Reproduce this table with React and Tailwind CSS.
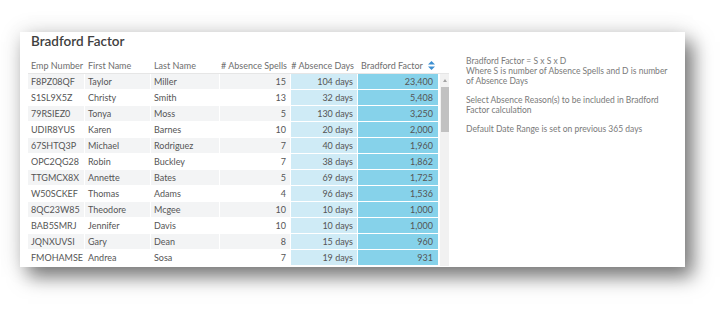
const rows = [
  ['F8PZ08QF', 'Taylor', 'Miller', 15, '104 days', '23,400'],
  ['S1SL9X5Z', 'Christy', 'Smith', 13, '32 days', '5,408'],
  ['79RSIEZ0', 'Tonya', 'Moss', 5, '130 days', '3,250'],
  ['UDIR8YUS', 'Karen', 'Barnes', 10, '20 days', '2,000'],
  ['67SHTQ3P', 'Michael', 'Rodriguez', 7, '40 days', '1,960'],
  ['OPC2QG28', 'Robin', 'Buckley', 7, '38 days', '1,862'],
  ['TTGMCX8X', 'Annette', 'Bates', 5, '69 days', '1,725'],
  ['W50SCKEF', 'Thomas', 'Adams', 4, '96 days', '1,536'],
  ['8QC23W85', 'Theodore', 'Mcgee', 10, '10 days', '1,000'],
  ['BAB5SMRJ', 'Jennifer', 'Davis', 10, '10 days', '1,000'],
  ['JQNXUVSI', 'Gary', 'Dean', 8, '15 days', '960'],
  ['FMOHAMSE', 'Andrea', 'Sosa', 7, '19 days', '931'],
]

function SortIcon() {
  return (
    <svg width="7" height="9" viewBox="0 0 7 9" className="shrink-0">
      <path d="M3.5 0 L7 3.6 L0 3.6 Z" fill="#3d8fd1" />
      <path d="M3.5 9 L7 5.4 L0 5.4 Z" fill="#3d8fd1" />
    </svg>
  )
}

export default function App() {
  return (
    <div
      className="w-[727px] h-[309px] bg-white overflow-hidden pl-[20px] pt-[32px]"
      style={{ fontFamily: 'Lato, "Open Sans", sans-serif' }}
    >
      <div className="w-[665px] h-[235px] bg-white flex flex-col shadow-[0_0_22px_rgba(0,0,0,0.12),8px_10px_18px_rgba(0,0,0,0.5)]">
        <div className="h-[26px] pl-[11px] text-[13.5px] font-semibold text-[#404040] leading-[19px]">
          Bradford Factor
        </div>
        <div className="flex flex-1 min-h-0">
          {/* table */}
          <div className="ml-[8px] flex flex-col text-[9px]">
            <div className="flex h-[16px] items-center text-[#6e6e6e] border-b border-[#e6e6e6]">
              <div className="w-[57px] pl-[3px]">Emp Number</div>
              <div className="w-[66px] pl-[3px]">First Name</div>
              <div className="w-[69px] pl-[3px]">Last Name</div>
              <div className="w-[71px] pr-[4px] text-right whitespace-nowrap"># Absence Spells</div>
              <div className="w-[67px] pr-[4px] text-right whitespace-nowrap"># Absence Days</div>
              <div className="w-[80px] pl-[3px] pr-[3px] flex items-center justify-between">
                <span>Bradford Factor</span>
                <SortIcon />
              </div>
            </div>
            <div className="flex">
              <div className="flex flex-col text-[#555]">
                {rows.map((r, i) => {
                  const stripe = i % 2 === 0 ? 'bg-[#f3f4f5]' : 'bg-white'
                  return (
                    <div key={r[0]} className="flex h-[16px]">
                      <div className={`w-[57px] pl-[3px] leading-[15px] border-b border-r border-white ${stripe}`}>{r[0]}</div>
                      <div className={`w-[66px] pl-[3px] leading-[15px] border-b border-r border-white ${stripe}`}>{r[1]}</div>
                      <div className={`w-[69px] pl-[3px] leading-[15px] border-b border-r border-white ${stripe}`}>{r[2]}</div>
                      <div className={`w-[71px] pr-[4px] text-right leading-[15px] border-b border-r border-white ${stripe}`}>{r[3]}</div>
                      <div className="w-[67px] pr-[4px] text-right leading-[15px] border-b border-r border-white bg-[#cfebf6]">{r[4]}</div>
                      <div className="w-[80px] pr-[5px] text-right leading-[15px] border-b border-white bg-[#86d2ea]">{r[5]}</div>
                    </div>
                  )
                })}
              </div>
              <div className="ml-[2px] w-[9px] bg-[#f1f1f1] flex flex-col items-center">
                <div className="h-[13px] flex items-center justify-center">
                  <div className="w-0 h-0 border-l-[2.5px] border-r-[2.5px] border-b-[3px] border-l-transparent border-r-transparent border-b-[#a3a3a3]" />
                </div>
                <div className="w-[8px] h-[45px] bg-[#c1c1c1]" />
              </div>
            </div>
          </div>
          {/* description */}
          <div className="ml-[17px] mt-[-2px] text-[8.5px] leading-[10px] text-[#7a7a7a] w-[205px]">
            <p>Bradford Factor = S x S x D</p>
            <p>Where S is number of Absence Spells and D is number of Absence Days</p>
            <p className="mt-[9px]">Select Absence Reason(s) to be included in Bradford Factor calculation</p>
            <p className="mt-[9px]">Default Date Range is set on previous 365 days</p>
          </div>
        </div>
      </div>
    </div>
  )
}
